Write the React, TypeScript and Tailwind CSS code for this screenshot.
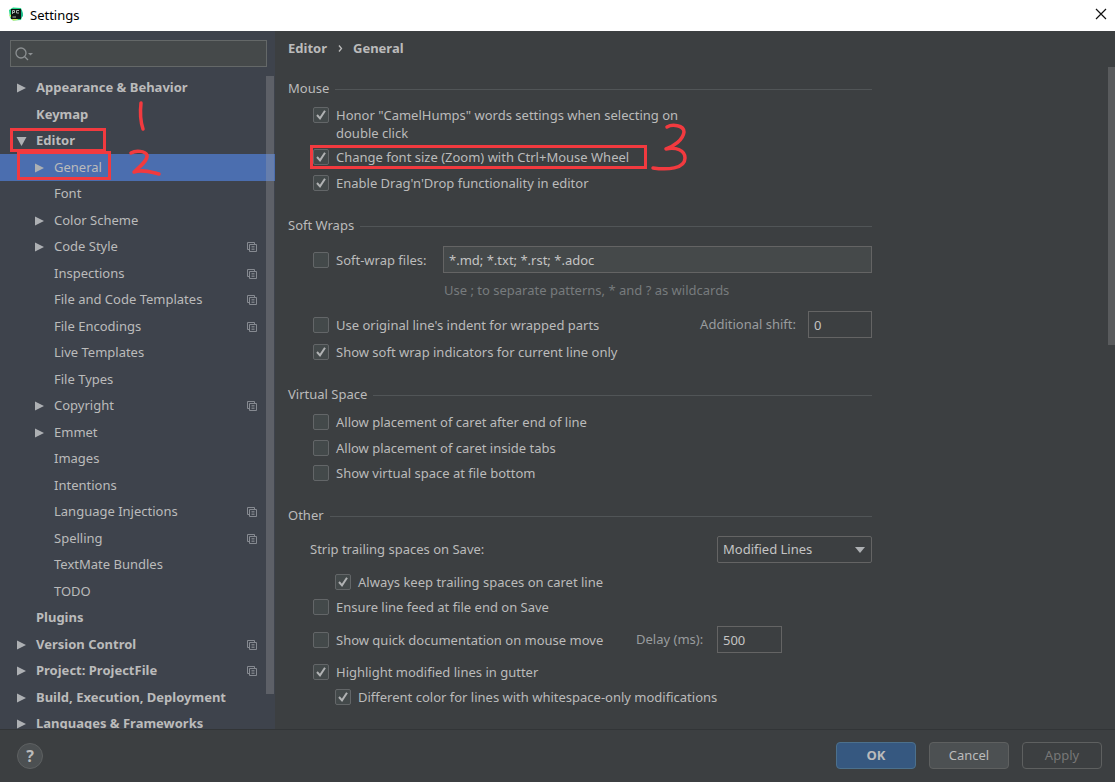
import React, { useState } from "react";

type Node = {
  label: string;
  level: 0 | 1;
  arrow?: "right" | "down";
  project?: boolean;
  selected?: boolean;
};

const tree: Node[] = [
  { label: "Appearance & Behavior", level: 0, arrow: "right" },
  { label: "Keymap", level: 0 },
  { label: "Editor", level: 0, arrow: "down" },
  { label: "General", level: 1, arrow: "right", selected: true },
  { label: "Font", level: 1 },
  { label: "Color Scheme", level: 1, arrow: "right" },
  { label: "Code Style", level: 1, arrow: "right", project: true },
  { label: "Inspections", level: 1, project: true },
  { label: "File and Code Templates", level: 1, project: true },
  { label: "File Encodings", level: 1, project: true },
  { label: "Live Templates", level: 1 },
  { label: "File Types", level: 1 },
  { label: "Copyright", level: 1, arrow: "right", project: true },
  { label: "Emmet", level: 1, arrow: "right" },
  { label: "Images", level: 1 },
  { label: "Intentions", level: 1 },
  { label: "Language Injections", level: 1, project: true },
  { label: "Spelling", level: 1, project: true },
  { label: "TextMate Bundles", level: 1 },
  { label: "TODO", level: 1 },
  { label: "Plugins", level: 0 },
  { label: "Version Control", level: 0, arrow: "right", project: true },
  { label: "Project: ProjectFile", level: 0, arrow: "right", project: true },
  { label: "Build, Execution, Deployment", level: 0, arrow: "right" },
  { label: "Languages & Frameworks", level: 0, arrow: "right" },
];

function Arrow({ dir }: { dir?: "right" | "down" }) {
  return (
    <svg className="mr-2 size-3 shrink-0" viewBox="0 0 12 12" fill="#adb0b3" aria-hidden="true">
      {dir === "right" && <path d="M1 1.500 10 6 1 10.500Z" />}
      {dir === "down" && <path d="M0.500 2H10.500L5.500 11Z" />}
    </svg>
  );
}

function ProjectIcon() {
  return (
    <svg className="size-3 shrink-0" viewBox="0 0 12 12" fill="none" stroke="#868a91" aria-hidden="true">
      <path d="M3 8.500H1.500V1.500H8.500V3" />
      <path d="M3.500 3.500H10.500V10.500H3.500Z" />
      <path d="M5.500 5.500H8.500M5.500 7H8.500M5.500 8.500H8.500" strokeWidth="0.8" />
    </svg>
  );
}

function TreeRow({ node }: { node: Node }) {
  return (
    <li
      className={
        "flex h-[26px] items-center pr-[17px] even:h-[27px] " +
        (node.level === 0 ? "pl-4 font-bold " : "pl-[34px] ") +
        (node.selected ? "bg-[#4b6eaf]" : "")
      }
    >
      <Arrow dir={node.arrow} />
      <a href="#" className="flex-1 whitespace-nowrap">
        {node.label}
      </a>
      {node.project && <ProjectIcon />}
    </li>
  );
}

function Check({
  label,
  on = false,
  className = "",
}: {
  label: string;
  on?: boolean;
  className?: string;
}) {
  const [checked, setChecked] = useState(on);
  return (
    <label className={"flex items-start gap-[7px] leading-[18px] " + className}>
      <span className="mt-px grid size-4 shrink-0">
        <input
          type="checkbox"
          checked={checked}
          onChange={(e) => setChecked(e.target.checked)}
          className="col-start-1 row-start-1 size-4 appearance-none rounded-xs border border-[#636668] bg-[#43494a]"
        />
        {checked && (
          <svg
            className="pointer-events-none col-start-1 row-start-1 size-4"
            viewBox="0 0 16 16"
            fill="none"
            stroke="#b0b2b3"
            strokeWidth="2"
            aria-hidden="true"
          >
            <path d="M4 8 7 11.300 12 3.800" />
          </svg>
        )}
      </span>
      <span>{label}</span>
    </label>
  );
}

function Heading({ children }: { children: React.ReactNode }) {
  return (
    <div className="flex h-5 items-center gap-1.5">
      <h2>{children}</h2>
      <div className="h-px flex-1 bg-[#515557]" />
    </div>
  );
}

function Marks() {
  return (
    <svg
      className="pointer-events-none absolute top-0 left-0"
      width="700"
      height="200"
      viewBox="0 0 700 200"
      fill="none"
      stroke="#f23a3f"
      strokeWidth="3"
      aria-hidden="true"
    >
      <rect x="11.500" y="129.500" width="93" height="21" />
      <rect x="18.500" y="152.500" width="91" height="26" />
      <rect x="311.500" y="146.500" width="334" height="21" />
      <g strokeWidth="3.500" strokeLinecap="round" strokeLinejoin="round">
        <path d="M141 103C140 112 140 120 143 129" />
        <path d="M131 153C136 150 145 151 147 155C148 160 141 166 134 172C142 169 151 172 159 174" />
        <path d="M667 127C672 124 684 125 684 132C683 140 674 146 666 149C676 147 685 150 685 158C685 169 667 170 653 168" />
      </g>
    </svg>
  );
}

const field =
  "h-[27px] border border-[#646464] px-[5px] text-[#c4c4c4] outline-none";

export default function App() {
  return (
    <div className="relative flex h-screen flex-col overflow-hidden bg-[#3c3f41] font-['Noto_Sans','Open_Sans',sans-serif] text-[13px] text-[#bbbbbb]">
      <header className="flex h-[31px] shrink-0 items-center bg-white pr-1.5 pl-2 text-black">
        <svg className="mb-1 size-4" viewBox="0 0 16 16" aria-hidden="true">
          <path d="M1 4 5 1.500 13 2 15 8 13 14 5 14.500 2 12Z" fill="#21d789" />
          <path d="M1 9 5 14.500 10 14 6 8Z" fill="#d9ef58" />
          <path d="M10 3 14 4 15 10 12 13Z" fill="#1ab98a" />
          <rect x="3" y="3" width="10" height="10" fill="#101412" />
          <path d="M4.500 8V4.500H6.500V6.500H4.500M11 4.500H8.500V7H11M4.500 11H8" stroke="#b8c4bd" strokeWidth="0.9" fill="none" />
        </svg>
        <h1 className="ml-1.5 flex-1">Settings</h1>
        <button aria-label="Close" className="flex size-4 items-center justify-center">
          <svg className="mb-1 size-3" viewBox="0 0 12 12" stroke="#111" strokeWidth="1.200" aria-hidden="true">
            <path d="M1 1 11 11M11 1 1 11" />
          </svg>
        </button>
      </header>

      <div className="flex min-h-0 flex-1">
        <aside className="relative w-[275px] shrink-0 overflow-hidden bg-[#3e434c]">
          <div className="mt-[9px] mr-2 ml-[10px] flex h-[27px] items-center border border-[#646868] bg-[#45494a] pl-1">
            <svg className="size-5 shrink-0" viewBox="0 0 20 20" fill="none" stroke="#8c9092" strokeWidth="1.300" aria-hidden="true">
              <circle cx="6" cy="9" r="5" />
              <path d="M9.500 12.500 13 16" />
              <path d="M13 9H18L15.500 11.500Z" fill="#8c9092" stroke="none" />
            </svg>
            <input type="text" aria-label="Search settings" className="min-w-0 flex-1 outline-none" />
          </div>
          <ul className="mt-2">
            {tree.map((n) => (
              <TreeRow key={n.label} node={n} />
            ))}
          </ul>
          <div className="absolute top-[45px] right-px bottom-[35px] w-2 bg-[#a6a6a6]/30" />
        </aside>

        <main className="relative min-w-0 flex-1 overflow-hidden pt-2 pr-8 pl-[13px]">
          <nav className="flex h-5 items-center font-bold" aria-label="Breadcrumb">
            <a href="#">Editor</a>
            <svg className="mx-2 size-[10px]" viewBox="0 0 10 10" fill="none" stroke="#bbbbbb" strokeWidth="1.300" aria-hidden="true">
              <path d="M4 1.500 6.500 4.500 4 7.500" />
            </svg>
            <a href="#">General</a>
          </nav>

          <div className="max-w-[584px]">
            <section className="mt-5">
              <Heading>Mouse</Heading>
              <div className="pl-[25px]">
                <Check className="mt-[7px] max-w-[380px]" on label={'Honor "CamelHumps" words settings when selecting on double click'} />
                <Check className="mt-1.5" on label="Change font size (Zoom) with Ctrl+Mouse Wheel" />
                <Check className="mt-2" on label="Enable Drag'n'Drop functionality in editor" />
              </div>
            </section>

            <section className="mt-6">
              <Heading>Soft Wraps</Heading>
              <div className="pl-[25px]">
                <div className="mt-[10px] flex items-center">
                  <Check className="w-[130px] whitespace-nowrap" label="Soft-wrap files:" />
                  <input type="text" aria-label="Soft-wrap files" defaultValue="*.md; *.txt; *.rst; *.adoc" className={field + " min-w-0 flex-1 bg-[#45494a]"} />
                </div>
                <p className="mt-2 pl-[131px] leading-[18px] text-[#777b7d]">
                  Use ; to separate patterns, * and ? as wildcards
                </p>
                <div className="mt-3 flex items-center">
                  <Check className="flex-1" label="Use original line's indent for wrapped parts" />
                  <label htmlFor="shift" className="mr-3 text-[#999c9e]">Additional shift:</label>
                  <input id="shift" type="text" defaultValue="0" className={field + " w-16"} />
                </div>
                <Check className="mt-[5px]" on label="Show soft wrap indicators for current line only" />
              </div>
            </section>

            <section className="mt-6">
              <Heading>Virtual Space</Heading>
              <div className="pl-[25px]">
                <Check className="mt-2" label="Allow placement of caret after end of line" />
                <Check className="mt-2" label="Allow placement of caret inside tabs" />
                <Check className="mt-[7px]" label="Show virtual space at file bottom" />
              </div>
            </section>

            <section className="mt-6">
              <Heading>Other</Heading>
              <div className="pl-[25px]">
                <div className="mt-[10px] -ml-[3px] flex items-center justify-between">
                  <label htmlFor="strip">Strip trailing spaces on Save:</label>
                  <span className="grid w-[155px] items-center">
                    <select id="strip" className={field + " col-start-1 row-start-1 appearance-none rounded-xs"}>
                      <option>Modified Lines</option>
                      <option>All</option>
                      <option>None</option>
                    </select>
                    <svg className="pointer-events-none col-start-1 row-start-1 mr-[7px] h-[6px] w-[10px] justify-self-end" viewBox="0 0 10 6" fill="#adb0b3" aria-hidden="true">
                      <path d="M0 0H10L5 6Z" />
                    </svg>
                  </span>
                </div>
                <Check className="mt-[10px] ml-[22px]" on label="Always keep trailing spaces on caret line" />
                <Check className="mt-[7px]" label="Ensure line feed at file end on Save" />
                <div className="mt-[10px] flex items-center">
                  <Check className="w-[323px] max-w-full whitespace-nowrap" label="Show quick documentation on mouse move" />
                  <div className="flex w-[81px] items-center">
                    <label htmlFor="delay" className="whitespace-nowrap text-[#999c9e]">Delay (ms):</label>
                  </div>
                  <input id="delay" type="text" defaultValue="500" className={field + " w-[65px]"} />
                </div>
                <Check className="mt-[10px]" on label="Highlight modified lines in gutter" />
                <Check className="mt-[7px] ml-[22px]" on label="Different color for lines with whitespace-only modifications" />
              </div>
            </section>
          </div>
          <div className="absolute top-9 right-0 h-[278px] w-[7px] bg-[#595b5d]" />
        </main>
      </div>

      <footer className="flex h-[53px] shrink-0 items-center gap-[13px] border-t border-[#323537] pr-[13px] pb-px pl-[17px]">
        <button aria-label="Help" className="mr-auto size-[26px] rounded-full border border-[#5e6162] bg-[#4c5052] text-base leading-none font-bold">
          ?
        </button>
        <button className="h-[27px] w-20 rounded-sm border border-[#4c708c] bg-[#365880] font-bold">OK</button>
        <button className="h-[27px] w-20 rounded-sm border border-[#5e6060] bg-[#4c5052]">Cancel</button>
        <button disabled className="h-[27px] w-20 rounded-sm border border-[#5e6060] text-[#777777]">Apply</button>
      </footer>
      <Marks />
    </div>
  );
}
